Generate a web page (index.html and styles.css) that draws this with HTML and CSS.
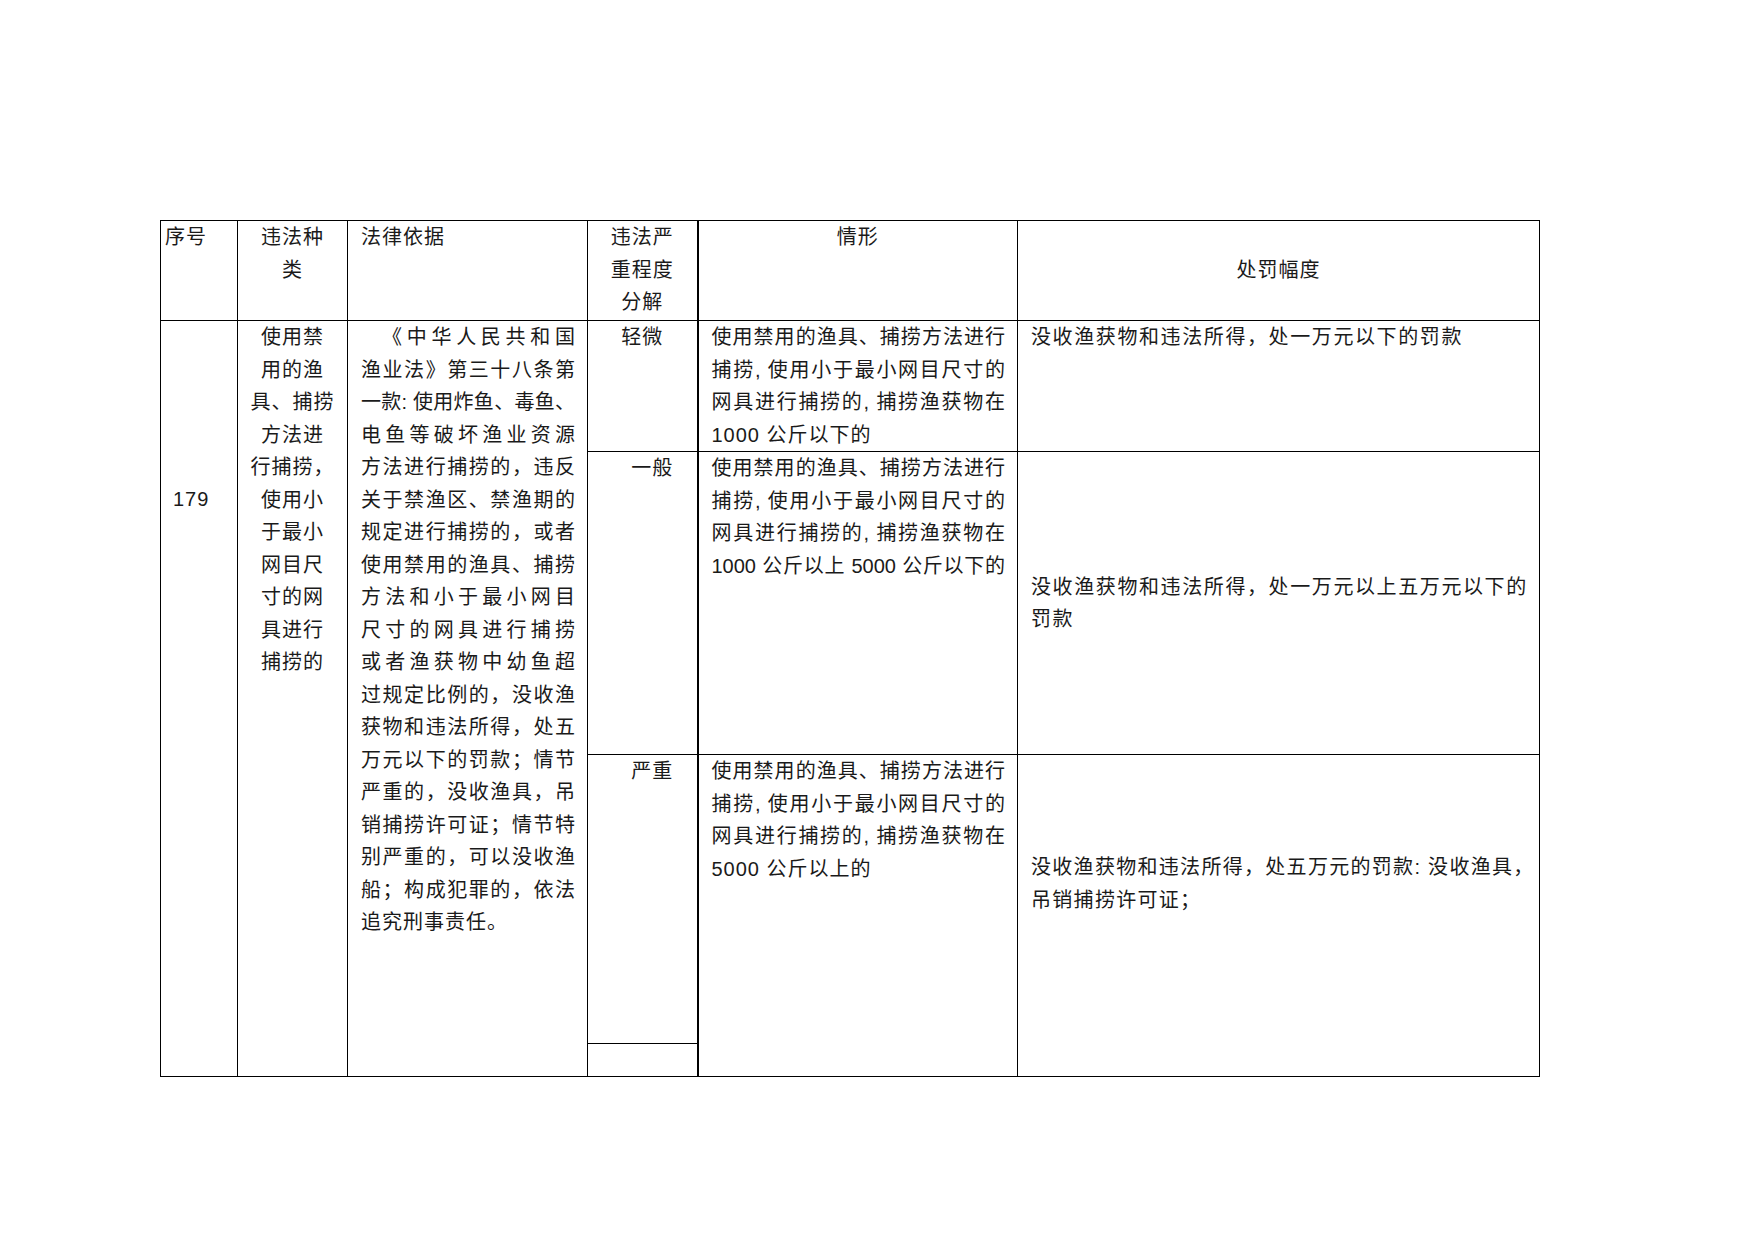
FILE: index.html
```html
<!DOCTYPE html>
<html lang="zh-CN">
<head>
<meta charset="utf-8">
<title>违法种类处罚幅度表</title>
<link rel="stylesheet" href="styles.css">
</head>
<body>
<div class="sheet">
<table class="grid">
  <colgroup>
    <col class="w-seq">
    <col class="w-kind">
    <col class="w-law">
    <col class="w-level">
    <col class="w-case">
    <col class="w-penalty">
  </colgroup>
  <tr class="r-head">
    <td class="seq-head">序号</td>
    <td class="center">违法种<br>类</td>
    <td class="law-head">法律依据</td>
    <td class="center">违法严<br>重程度<br>分解</td>
    <td class="center sep">情形</td>
    <td class="center middle">处罚幅度</td>
  </tr>
  <tr class="r-1">
    <td class="seq" rowspan="4">179</td>
    <td class="center kind" rowspan="4">使用禁<br>用的渔<br>具、捕捞<br>方法进<br>行捕捞，<br>使用小<br>于最小<br>网目尺<br>寸的网<br>具进行<br>捕捞的</td>
    <td class="law" rowspan="4">
      <span class="jl first">《中华人民共和国</span>
      <span class="jl">渔业法》第三十八条第</span>
      <span class="jl">一款: 使用炸鱼、毒鱼、</span>
      <span class="jl">电鱼等破坏渔业资源</span>
      <span class="jl">方法进行捕捞的，违反</span>
      <span class="jl">关于禁渔区、禁渔期的</span>
      <span class="jl">规定进行捕捞的，或者</span>
      <span class="jl">使用禁用的渔具、捕捞</span>
      <span class="jl">方法和小于最小网目</span>
      <span class="jl">尺寸的网具进行捕捞</span>
      <span class="jl">或者渔获物中幼鱼超</span>
      <span class="jl">过规定比例的，没收渔</span>
      <span class="jl">获物和违法所得，处五</span>
      <span class="jl">万元以下的罚款；情节</span>
      <span class="jl">严重的，没收渔具，吊</span>
      <span class="jl">销捕捞许可证；情节特</span>
      <span class="jl">别严重的，可以没收渔</span>
      <span class="jl">船；构成犯罪的，依法</span>
      <span class="ll">追究刑事责任。</span>
    </td>
    <td class="center level">轻微</td>
    <td class="case sep">
      <span class="jl">使用禁用的渔具、捕捞方法进行</span>
      <span class="jl">捕捞, 使用小于最小网目尺寸的</span>
      <span class="jl">网具进行捕捞的, 捕捞渔获物在</span>
      <span class="ll">1000 公斤以下的</span>
    </td>
    <td class="penalty">没收渔获物和违法所得，处一万元以下的罚款</td>
  </tr>
  <tr class="r-2">
    <td class="center level shifted">一般</td>
    <td class="case sep">
      <span class="jl">使用禁用的渔具、捕捞方法进行</span>
      <span class="jl">捕捞, 使用小于最小网目尺寸的</span>
      <span class="jl">网具进行捕捞的, 捕捞渔获物在</span>
      <span class="jl">1000 公斤以上 5000 公斤以下的</span>
    </td>
    <td class="penalty middle">没收渔获物和违法所得，处一万元以上五万元以下的<br>罚款</td>
  </tr>
  <tr class="r-3">
    <td class="center level shifted">严重</td>
    <td class="case sep" rowspan="2">
      <span class="jl">使用禁用的渔具、捕捞方法进行</span>
      <span class="jl">捕捞, 使用小于最小网目尺寸的</span>
      <span class="jl">网具进行捕捞的, 捕捞渔获物在</span>
      <span class="ll">5000 公斤以上的</span>
    </td>
    <td class="penalty lowered" rowspan="2">没收渔获物和违法所得，处五万元的罚款: 没收渔具，<br>吊销捕捞许可证；</td>
  </tr>
  <tr class="r-4">
    <td class="level"></td>
  </tr>
</table>
</div>
</body>
</html>
```

FILE: styles.css
```css
html, body {
  margin: 0;
  padding: 0;
  background: #ffffff;
}

body {
  font-family: "Liberation Sans", "Noto Sans CJK SC", sans-serif;
  font-size: 20px;
  color: #1a1a1a;
}

.sheet {
  padding: 220px 0 0 160px;
}

.grid {
  border-collapse: collapse;
  table-layout: fixed;
  width: 1379px;
}

.w-seq { width: 77px; }
.w-kind { width: 110px; }
.w-law { width: 240px; }
.w-level { width: 110px; }
.w-case { width: 320px; }
.w-penalty { width: 522px; }

.grid td {
  border: 1px solid #000;
  vertical-align: top;
  padding: 0 12px;
  line-height: 32.5px;
  letter-spacing: 1px;
}

.r-head { height: 100px; }
.r-1 { height: 130px; }
.r-2 { height: 303px; }
.r-3 { height: 289px; }
.r-4 { height: 33px; }

.grid td.seq-head {
  padding-left: 4px;
  padding-right: 0;
}

.grid td.law-head {
  padding-left: 13px;
}

.center {
  text-align: center;
}

.grid td.middle {
  vertical-align: middle;
}

.grid td.sep {
  border-left: 2px solid #000;
}

.grid td.seq {
  padding-left: 12px;
  padding-top: 162px;
}

.grid td.kind {
  padding: 0 4px;
}

.grid td.law {
  padding: 0 12px 0 13px;
  letter-spacing: 0;
}

.grid td.level {
  padding: 0 4px;
}

.grid td.shifted {
  padding-left: 24px;
}

.grid td.case {
  padding: 0 12px 0 13px;
  letter-spacing: 0;
}

.grid td.penalty {
  padding: 0 2px 0 13px;
  letter-spacing: 1.6px;
  white-space: nowrap;
}

.grid td.lowered {
  padding-top: 96px;
  letter-spacing: 1.3px;
}

.jl {
  display: block;
  text-align: justify;
  text-align-last: justify;
}

.jl.first {
  text-indent: 21px;
}

.ll {
  display: block;
  text-align: left;
  letter-spacing: 1px;
}
```
